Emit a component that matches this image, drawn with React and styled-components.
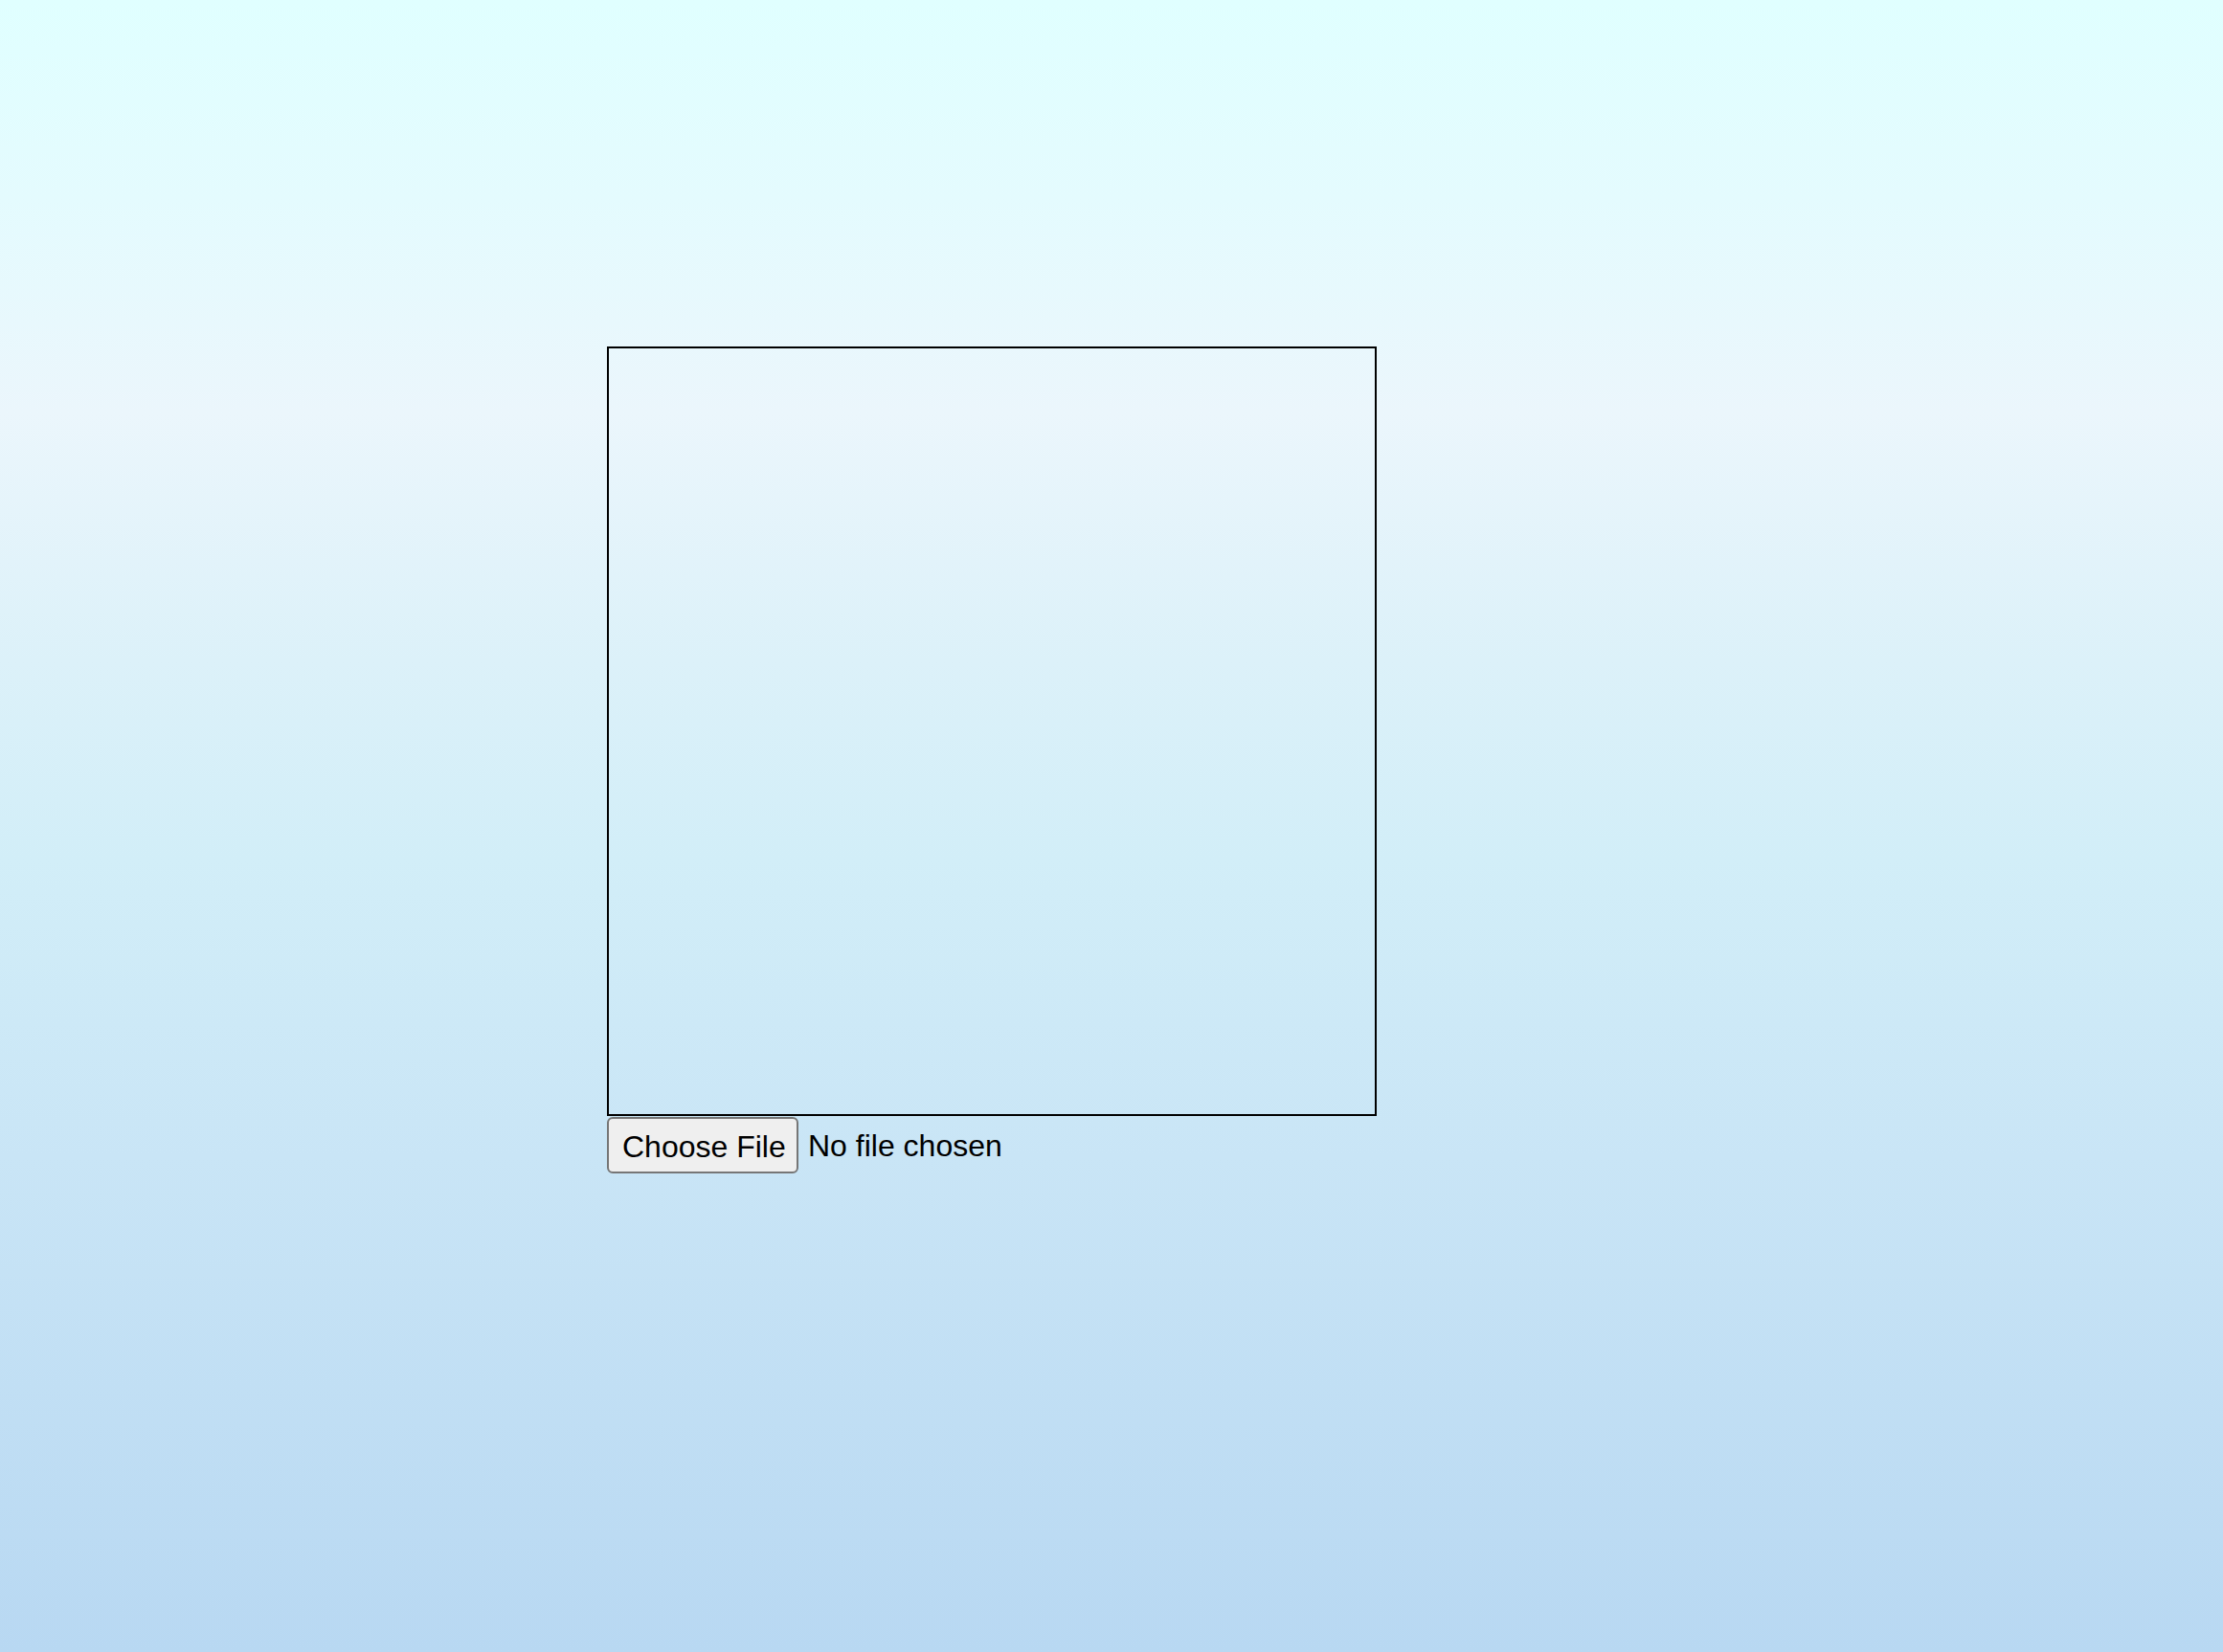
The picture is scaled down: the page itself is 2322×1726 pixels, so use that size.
import React from "react";
import styled, { createGlobalStyle } from "styled-components";

const GlobalStyle = createGlobalStyle`
  html, body {
    margin: 0;
    padding: 0;
  }
  body {
    min-height: 100vh;
    background: linear-gradient(
      to bottom,
      #e0ffff 0%,
      #e4fbfe 12%,
      #ebf6fc 25%,
      #dcf1f9 40%,
      #d2eef8 52%,
      #c9e5f6 70%,
      #b8d8f2 100%
    );
    background-attachment: fixed;
    font-family: "Liberation Sans", Arial, sans-serif;
  }
`;

const Page = styled.div`
  min-height: 100vh;
  box-sizing: border-box;
  padding: 362px 0 0 634px;
  display: flex;
  flex-direction: column;
  align-items: flex-start;
`;

const Canvas = styled.div`
  width: 800px;
  height: 800px;
  border: 2px solid #000;
  background: transparent;
`;

const FileRow = styled.div`
  display: flex;
  align-items: center;
  gap: 10px;
  margin-top: 1px;
`;

const ChooseButton = styled.button`
  box-sizing: border-box;
  height: 59px;
  width: 200px;
  padding: 2px 14px 0;
  border: 2px solid #767676;
  border-radius: 6px;
  background: #efefef;
  color: #000;
  font-family: "Liberation Sans", Arial, sans-serif;
  font-size: 32px;
  line-height: 1;
  white-space: nowrap;
  cursor: default;
`;

const FileStatus = styled.span`
  font-family: "Liberation Sans", Arial, sans-serif;
  font-size: 32px;
  color: #000;
  white-space: nowrap;
  padding-top: 2px;
`;

export default function App() {
  return (
    <>
      <GlobalStyle />
      <Page>
        <Canvas />
        <FileRow>
          <ChooseButton type="button">Choose File</ChooseButton>
          <FileStatus>No file chosen</FileStatus>
        </FileRow>
      </Page>
    </>
  );
}
